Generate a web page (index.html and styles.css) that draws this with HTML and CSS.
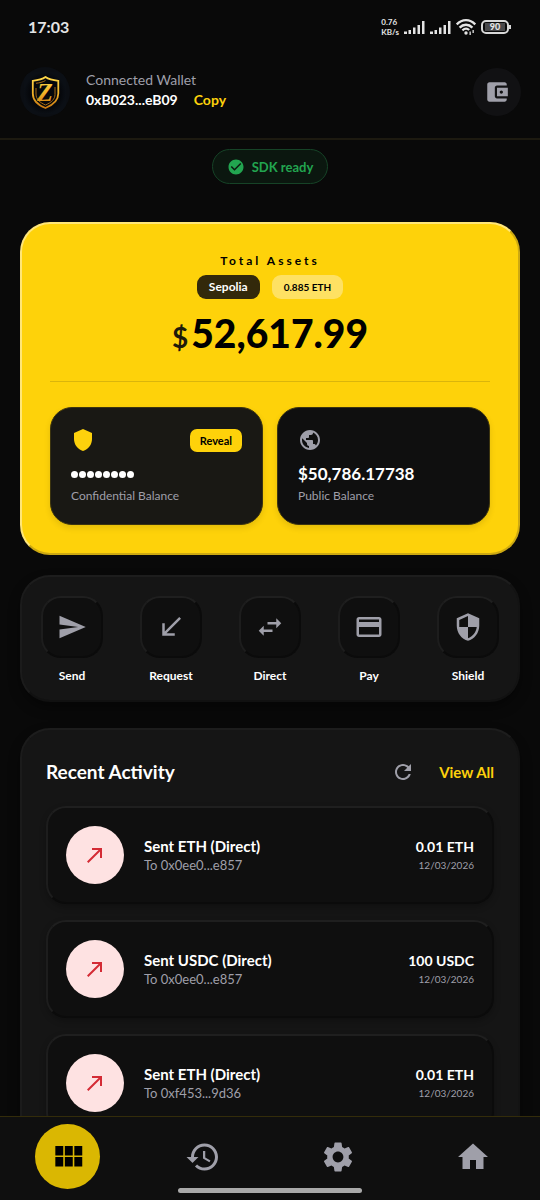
FILE: index.html
```html
<!DOCTYPE html>
<html lang="en">
<head>
<meta charset="utf-8">
<meta name="viewport" content="width=device-width, initial-scale=1">
<title>Wallet</title>
<link rel="stylesheet" href="styles.css">
</head>
<body>
<svg class="sprite" aria-hidden="true">
  <symbol id="made" viewBox="0 0 24 24"><path d="M9 5v2h6.59L4 18.59 5.41 20 17 8.41V15h2V5z"/></symbol>
</svg>
<div class="app">
  <div class="status">
    <span class="clock">17:03</span>
    <div class="indicators">
      <span class="speed"><span>0.76</span><span>KB/s</span></span>
      <svg class="signal" viewBox="0 0 21 14"><path d="M0 11.5h3V14H0zM4.500 10h2.500v4H4.500zM9 7.500h2.500V14H9zM13.500 5H16v9h-2.500zM18 1h2.500v13H18z"/></svg>
      <svg class="signal" viewBox="0 0 21 14"><path d="M0 11.5h3V14H0zM4.500 10h2.500v4H4.500zM9 7.500h2.500V14H9zM13.500 5H16v9h-2.500zM18 1h2.500v13H18z"/></svg>
      <svg class="wifi" viewBox="0 0 20 16"><g fill="none" stroke="#e4e4e4" stroke-width="2.300"><path d="M.8 5.400C6-.2 14-.2 19.200 5.400"/><path d="M3.600 8.600C7.300 4.800 12.700 4.800 16.400 8.600"/><path d="M6.400 11.400C8.600 9.400 11.400 9.400 13.200 11"/></g><circle cx="10" cy="14" r="1.700"/><path d="M13.500 12.500h1.300V16h-1.300zM16.500 11h1.300v3h-1.300z"/></svg>
      <span class="battery"><span class="level">90</span></span>
    </div>
  </div>

  <header class="header">
    <svg class="avatar" viewBox="0 0 50 50" role="img" aria-label="Logo">
      <defs>
        <linearGradient id="gold" x1="0" y1="0" x2="0" y2="1"><stop offset="0" stop-color="#ffd84a"/><stop offset=".5" stop-color="#f2b429"/><stop offset="1" stop-color="#c67812"/></linearGradient>
        <radialGradient id="night"><stop offset="0" stop-color="#05070a"/><stop offset=".75" stop-color="#06080c"/><stop offset="1" stop-color="#0b0f15"/></radialGradient>
        <clipPath id="round"><circle cx="25" cy="25" r="25"/></clipPath>
      </defs>
      <g clip-path="url(#round)"><rect width="50" height="50" fill="#0b0e13"/><rect x="4" y="5" width="42" height="42" rx="9" fill="url(#night)"/></g>
      <path d="M25.500 10C22 12.500 17.500 13.300 12.800 13.800v12.700c0 7 5 11.500 12.700 14.500 7.500-3 12.800-7.500 12.800-14.500V13.800C33.500 13.300 29 12.500 25.500 10z" fill="none" stroke="url(#gold)" stroke-width="1.800"/>
      <path d="M25.500 13.500c-3 1.800-6 2.300-9.500 2.800M16 21v6c0 5.500 4 8.600 9.500 11 6-2.600 9.500-6 9.500-10.500V20" fill="none" stroke="#a66a14" stroke-width="1"/>
      <text class="logo-letter" x="25" y="34" text-anchor="middle" fill="url(#gold)">Z</text>
    </svg>
    <div class="wallet">
      <span class="wallet-label">Connected Wallet</span>
      <div class="wallet-row"><strong>0xB023...eB09</strong><button class="link">Copy</button></div>
    </div>
    <button class="wallet-button" aria-label="Wallet">
      <svg viewBox="0 0 24 24"><path d="M21 18v1c0 1.100-.9 2-2 2H5c-1.110 0-2-.9-2-2V5c0-1.100.89-2 2-2h14c1.100 0 2 .9 2 2v1h-9c-1.110 0-2 .9-2 2v8c0 1.100.89 2 2 2h9zm-9-2h10V8H12v8zm4-2.500c-.83 0-1.500-.67-1.500-1.500s.67-1.500 1.500-1.500 1.500.67 1.500 1.500-.67 1.500-1.500 1.500z"/></svg>
    </button>
  </header>

  <main class="content">
    <div class="sdk">
      <svg viewBox="0 0 24 24"><path d="M12 2C6.480 2 2 6.480 2 12s4.480 10 10 10 10-4.480 10-10S17.520 2 12 2zm-2 15l-5-5 1.410-1.410L10 14.170l7.590-7.590L19 8l-9 9z"/></svg>
      <span>SDK ready</span>
    </div>

    <section class="assets">
      <h1 class="assets-title">Total Assets</h1>
      <div class="badges"><span class="badge dark">Sepolia</span><span class="badge light">0.885 ETH</span></div>
      <p class="total"><span class="currency">$</span>52,617.99</p>
      <div class="balances">
        <article class="balance confidential">
          <div class="balance-top">
            <svg viewBox="0 0 24 24"><path d="M12 1L3 5v6c0 5.550 3.840 10.740 9 12 5.160-1.260 9-6.450 9-12V5l-9-4z"/></svg>
            <button class="reveal">Reveal</button>
          </div>
          <div class="balance-value masked" role="img" aria-label="Hidden balance"><i></i><i></i><i></i><i></i><i></i><i></i><i></i><i></i></div>
          <span class="balance-label">Confidential Balance</span>
        </article>
        <article class="balance">
          <div class="balance-top">
            <svg viewBox="0 0 24 24"><path d="M12 2C6.480 2 2 6.480 2 12s4.480 10 10 10 10-4.480 10-10S17.520 2 12 2zm-1 17.930c-3.950-.49-7-3.850-7-7.930 0-.62.08-1.210.21-1.790L9 15v1c0 1.100.9 2 2 2v1.930zm6.900-2.540c-.26-.81-1-1.390-1.900-1.390h-1v-3c0-.55-.45-1-1-1H8v-2h2c.55 0 1-.45 1-1V7h2c1.100 0 2-.9 2-2v-.41c2.930 1.190 5 4.060 5 7.410 0 2.080-.8 3.970-2.100 5.390z"/></svg>
          </div>
          <div class="balance-value">$50,786.17738</div>
          <span class="balance-label">Public Balance</span>
        </article>
      </div>
    </section>

    <section class="actions">
      <button class="action"><span class="tile"><svg viewBox="0 0 24 24"><path d="M2.010 21L23 12 2.010 3 2 10l15 2-15 2z"/></svg></span>Send</button>
      <button class="action"><span class="tile"><svg viewBox="0 0 24 24"><path d="M20 5.410L18.590 4 7 15.590V9H5v10h10v-2H8.410z"/></svg></span>Request</button>
      <button class="action"><span class="tile"><svg viewBox="0 0 24 24"><path d="M6.990 11L3 15l3.990 4v-3H14v-2H6.990v-3zM21 9l-3.990-4v3H10v2h7.010v3L21 9z"/></svg></span>Direct</button>
      <button class="action"><span class="tile"><svg viewBox="0 0 24 24"><path d="M20 4H4c-1.110 0-1.990.89-1.990 2L2 18c0 1.110.89 2 2 2h16c1.110 0 2-.89 2-2V6c0-1.110-.89-2-2-2zm0 14H4v-6h16v6zm0-10H4V6h16v2z"/></svg></span>Pay</button>
      <button class="action"><span class="tile"><svg viewBox="0 0 24 24"><path d="M12 1L3 5v6c0 5.550 3.840 10.740 9 12 5.160-1.260 9-6.450 9-12V5l-9-4zm0 10.990h7c-.53 4.120-3.280 7.790-7 8.940V12H5V6.300l7-3.110v8.800z"/></svg></span>Shield</button>
    </section>

    <section class="activity">
      <div class="activity-head">
        <h2>Recent Activity</h2>
        <button class="refresh" aria-label="Refresh"><svg viewBox="0 0 24 24"><path d="M17.650 6.350C16.200 4.900 14.210 4 12 4c-4.420 0-7.990 3.580-7.990 8s3.570 8 7.990 8c3.730 0 6.840-2.550 7.730-6h-2.080c-.82 2.330-3.040 4-5.650 4-3.310 0-6-2.690-6-6s2.690-6 6-6c1.660 0 3.140.69 4.220 1.780L13 11h7V4l-2.350 2.350z"/></svg></button>
        <a class="link view-all" href="#">View All</a>
      </div>
      <ul class="list">
        <li class="item">
          <span class="circle"><svg><use href="#made"/></svg></span>
          <div class="item-text"><strong>Sent ETH (Direct)</strong><span>To 0x0ee0...e857</span></div>
          <div class="item-sum"><strong>0.01 ETH</strong><time>12/03/2026</time></div>
        </li>
        <li class="item">
          <span class="circle"><svg><use href="#made"/></svg></span>
          <div class="item-text"><strong>Sent USDC (Direct)</strong><span>To 0x0ee0...e857</span></div>
          <div class="item-sum"><strong>100 USDC</strong><time>12/03/2026</time></div>
        </li>
        <li class="item">
          <span class="circle"><svg><use href="#made"/></svg></span>
          <div class="item-text"><strong>Sent ETH (Direct)</strong><span>To 0xf453...9d36</span></div>
          <div class="item-sum"><strong>0.01 ETH</strong><time>12/03/2026</time></div>
        </li>
      </ul>
    </section>
  </main>

  <nav class="nav">
    <a class="tab active" href="#" aria-label="Dashboard"><svg viewBox="0 0 24 24"><path d="M4 11h5V5H4v6zm0 7h5v-6H4v6zm6 0h5v-6h-5v6zm6 0h5v-6h-5v6zm-6-7h5V5h-5v6zm6-6v6h5V5h-5z"/></svg></a>
    <a class="tab" href="#" aria-label="History"><svg viewBox="0 0 24 24"><path d="M13 3c-4.970 0-9 4.030-9 9H1l3.890 3.890.07.14L9 12H6c0-3.870 3.130-7 7-7s7 3.130 7 7-3.130 7-7 7c-1.930 0-3.680-.79-4.940-2.060l-1.420 1.420C8.270 19.990 10.510 21 13 21c4.970 0 9-4.030 9-9s-4.030-9-9-9zm-1 5v5l4.280 2.540.72-1.210-3.500-2.080V8H12z"/></svg></a>
    <a class="tab" href="#" aria-label="Settings"><svg viewBox="0 0 24 24"><path d="M19.140 12.940c.04-.3.06-.61.06-.94 0-.32-.02-.64-.07-.94l2.030-1.580c.18-.14.23-.41.12-.61l-1.920-3.320c-.12-.22-.37-.29-.59-.22l-2.390.96c-.5-.38-1.030-.7-1.620-.94l-.36-2.540c-.04-.24-.24-.41-.48-.41h-3.840c-.24 0-.43.17-.47.41l-.36 2.540c-.59.24-1.130.57-1.620.94l-2.390-.96c-.22-.08-.47 0-.59.22L2.740 8.870c-.12.21-.08.47.12.61l2.030 1.580c-.05.3-.09.63-.09.94s.02.64.07.94l-2.030 1.580c-.18.14-.23.41-.12.61l1.920 3.320c.12.22.37.29.59.22l2.390-.96c.5.38 1.030.7 1.620.94l.36 2.540c.05.24.24.41.48.41h3.840c.24 0 .44-.17.47-.41l.36-2.540c.59-.24 1.130-.56 1.620-.94l2.390.96c.22.08.47 0 .59-.22l1.920-3.320c.12-.22.07-.47-.12-.61l-2.010-1.580zM12 15.600c-1.980 0-3.600-1.620-3.600-3.600s1.620-3.600 3.600-3.600 3.600 1.620 3.600 3.600-1.620 3.600-3.600 3.600z"/></svg></a>
    <a class="tab" href="#" aria-label="Home"><svg viewBox="0 0 24 24"><path d="M10 20v-6h4v6h5v-8h3L12 3 2 12h3v8z"/></svg></a>
    <span class="gesture"></span>
  </nav>
</div>
</body>
</html>
```
FILE: styles.css
```css
* { box-sizing: border-box; }
body {
  margin: 0;
  background: #090909;
  color: #fff;
  font-family: Lato, "Open Sans", sans-serif;
  font-size: 13px;
  line-height: 18px;
}
h1, h2, p, ul { margin: 0; padding: 0; }
button { margin: 0; padding: 0; border: 0; background: none; color: inherit; font: inherit; cursor: pointer; }
a { text-decoration: none; }
svg { display: block; flex: none; fill: #9f9fa9; }
.sprite { display: none; }

.app { height: 100vh; display: flex; flex-direction: column; }

.status {
  display: flex;
  align-items: center;
  justify-content: space-between;
  height: 56px;
  padding: 0 31px 2px 28px;
  color: #e4e4e4;
}
.clock { font-size: 16px; font-weight: 700; }
.indicators { display: flex; align-items: center; gap: 5px; }
.indicators svg { fill: #e4e4e4; }
.speed { display: flex; flex-direction: column; font-size: 8px; line-height: 10px; font-weight: 700; }
.signal { width: 21px; height: 14px; }
.wifi { width: 20px; height: 16px; }
.battery {
  position: relative;
  width: 28px;
  height: 14px;
  padding: 1px 2px;
  border: 2px solid #d8d8d8;
  border-radius: 5px;
}
.battery::after {
  content: "";
  position: absolute;
  top: 3px;
  right: -4px;
  width: 2px;
  height: 4px;
  background: #d8d8d8;
}
.level { display: block; background: #48484a; font-size: 9px; line-height: 8px; font-weight: 900; text-align: center; }

.header {
  display: flex;
  align-items: center;
  padding: 11px 19px 21px 20px;
  border-bottom: 2px solid #1d1a10;
}
.avatar { width: 50px; height: 50px; }
.logo-letter { font: italic 900 26px "Liberation Serif", serif; }
.wallet { flex: 1; margin-left: 16px; padding-bottom: 5px; display: flex; flex-direction: column; }
.wallet-label { color: #9f9fa9; font-size: 14px; line-height: 20px; }
.wallet-row { display: flex; align-items: center; gap: 16px; font-size: 14px; line-height: 20px; }
.link { color: #fdd10c; font-size: 14px; font-weight: 700; }
.wallet-button {
  display: grid;
  place-items: center;
  width: 48px;
  height: 48px;
  border-radius: 50%;
  background: #111113;
}
.wallet-button svg { width: 26px; height: 26px; }

.content {
  flex: 1;
  min-height: 0;
  overflow-y: auto;
  scrollbar-width: none;
  padding: 9px 20px 20px;
}
.sdk {
  display: flex;
  align-items: center;
  gap: 7px;
  width: fit-content;
  height: 35px;
  margin: 0 auto 38px;
  padding: 0 14px;
  border: 1px solid #164327;
  border-radius: 18px;
  background: #0b170f;
  color: #22a550;
  font-weight: 700;
}
.sdk svg { width: 18px; height: 18px; fill: #22a550; }

.assets {
  padding: 28px;
  border: 2px solid;
  border-color: #ffe678 #cda912 #cda912 #ffe678;
  border-radius: 30px;
  background: #fed20a;
  color: #000;
}
.assets-title { font-size: 12px; line-height: 18px; font-weight: 700; letter-spacing: 3px; text-align: center; }
.badges { display: flex; justify-content: center; gap: 12px; margin-top: 5px; }
.badge { padding: 0 12px; border-radius: 9px; font-size: 12px; line-height: 24px; font-weight: 700; }
.dark { background: #33290b; color: #fff; }
.light { background: #fee163; font-size: 10px; }
.total {
  margin-top: 10px;
  padding-bottom: 20px;
  border-bottom: 1px solid #dab50c;
  font-size: 39px;
  line-height: 48px;
  font-weight: 900;
  text-align: center;
}
.currency { margin-right: 3px; color: #1e1b0a; font-size: 28px; font-weight: 700; }
.balances { display: grid; grid-template-columns: 1fr 1fr; gap: 14px; margin-top: 25px; }
.balance {
  padding: 20px 20px 18px;
  border: 1px solid #3c340f;
  border-radius: 22px;
  background: #0f0f0f;
  box-shadow: 0 3px 6px #0000001c;
}
.confidential { background: #191814; }
.balance-top { display: flex; align-items: center; justify-content: space-between; height: 24px; }
.balance-top svg { width: 24px; height: 24px; }
.confidential svg { fill: #fdd10c; }
.reveal { padding: 0 10px; border-radius: 7px; background: #fed20a; color: #000; font-size: 11px; line-height: 23px; font-weight: 700; }
.balance-value { margin-top: 10px; color: #fff; font-size: 17px; line-height: 24px; font-weight: 700; }
.masked { display: flex; align-items: center; gap: 1px; height: 24px; }
.masked i { width: 7px; height: 7px; border-radius: 50%; background: #fff; }
.balance-label { display: block; color: #9f9fa9; font-size: 12px; line-height: 20px; }

.actions, .activity {
  border: 2px solid;
  border-color: #1d1d1d #131313 #111 #1b1b1b;
  border-radius: 30px;
  background: #151515;
  box-shadow: 0 6px 12px #00000060;
}
.actions { display: flex; justify-content: space-between; margin-top: 20px; padding: 19px 19px 16px; }
.action { display: flex; flex-direction: column; align-items: center; gap: 10px; width: 62px; font-size: 12px; line-height: 16px; font-weight: 700; }
.tile, .item {
  border: 2px solid;
  border-color: #1f1f1f #0b0b0b #0b0b0b #1d1d1d;
  background: #0f0f0f;
}
.tile { display: grid; place-items: center; width: 62px; height: 62px; border-radius: 20px; }
.tile svg { width: 30px; height: 30px; }

.activity { margin-top: 26px; padding: 30px 24px 24px; }
.activity-head { display: flex; align-items: center; height: 24px; margin-bottom: 22px; }
.activity-head h2 { flex: 1; font-size: 19px; line-height: 24px; font-weight: 700; }
.refresh { margin-right: 24px; }
.refresh svg { width: 24px; height: 24px; }
.view-all { font-size: 15px; }
.list { display: grid; gap: 16px; list-style: none; }
.item { display: flex; align-items: center; padding: 18px; border-radius: 20px; box-shadow: 0 3px 6px #00000040; }
.circle { display: grid; place-items: center; width: 58px; height: 58px; border-radius: 50%; background: #fee2e2; }
.circle svg { width: 24px; height: 24px; fill: #d42b35; }
.item-text, .item-sum { display: flex; flex-direction: column; color: #9f9fa9; }
.item-text { flex: 1; margin-left: 20px; }
.item-sum { align-items: flex-end; font-size: 10px; line-height: 16px; }
.item strong { color: #fff; font-size: 15px; line-height: 20px; }
.item .item-sum strong { font-size: 14px; }

.nav {
  position: relative;
  display: grid;
  grid-template-columns: repeat(4, 1fr);
  place-items: center;
  padding: 7px 0 11px;
  border-top: 1px solid #332c0a;
  background: #0f0f0f;
}
.tab { display: grid; place-items: center; width: 65px; height: 65px; border-radius: 50%; }
.tab svg { width: 36px; height: 36px; }
.active { background: #dab702; }
.active svg { width: 38px; height: 38px; fill: #000; }
.gesture {
  position: absolute;
  left: 33%;
  right: 33%;
  bottom: 7px;
  height: 5px;
  border-radius: 3px;
  background: #a9a9a9;
}
```
